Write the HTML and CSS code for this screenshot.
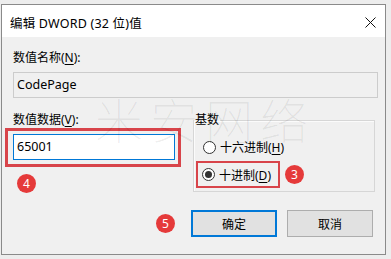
FILE: index.html
```html
<!DOCTYPE html>
<html lang="zh-CN">
<head>
  <meta charset="utf-8">
  <title>编辑 DWORD (32 位)值</title>
  <link rel="stylesheet" href="styles.css">
</head>
<body>
  <div class="window">
    <div class="titlebar">
      <span class="title">编辑 DWORD (32 位)值</span>
      <svg class="close" width="11" height="11" viewBox="0 0 11 11">
        <path d="M0.5 0.5 L10.5 10.5 M10.5 0.5 L0.5 10.5" stroke="#111" stroke-width="1" fill="none"/>
      </svg>
    </div>

    <div class="content">
      <div class="label">数值名称(<u>N</u>):</div>
      <div class="name-box">CodePage</div>

      <div class="lower">
        <div class="data-col">
          <div class="label">数值数据(<u>V</u>):</div>
          <div class="mark mark-input">
            <div class="value-box">65001</div>
          </div>
          <div class="badge badge-4">4</div>
        </div>

        <fieldset class="base-group">
          <legend>基数</legend>
          <div class="radio-row">
            <span class="radio"></span>
            <span>十六进制(<u>H</u>)</span>
          </div>
          <div class="radio-line">
            <div class="mark mark-radio">
              <span class="radio checked"></span>
              <span>十进制(<u>D</u>)</span>
            </div>
            <div class="badge">3</div>
          </div>
        </fieldset>
      </div>

      <div class="buttons">
        <div class="badge">5</div>
        <button class="btn btn-default">确定</button>
        <button class="btn">取消</button>
      </div>
    </div>

    <div class="watermark">米安网络</div>
  </div>
</body>
</html>
```

FILE: styles.css
```css
* {
  box-sizing: border-box;
}

body {
  margin: 0;
  background: #ededed;
  font-family: "Noto Sans", "Noto Sans CJK SC", sans-serif;
  font-size: 12px;
  color: #000;
}

.window {
  position: relative;
  margin: 4px 0 0 1px;
  width: 385px;
  height: 251px;
  border: 1px solid #8a8a8a;
  background: #f0f0f0;
  overflow: hidden;
}

.titlebar {
  height: 32px;
  background: #fff;
  display: flex;
  align-items: center;
  justify-content: space-between;
  padding: 2px 8px 0 8px;
}

.title {
  font-size: 12.5px;
  letter-spacing: 0.2px;
}

.close {
  margin-right: 1px;
}

.content {
  padding: 13px 7px 0 11px;
}

.label {
  line-height: 16px;
  height: 16px;
}

u {
  text-decoration-thickness: 1px;
  text-underline-offset: 2px;
}

.name-box {
  margin-top: 6px;
  height: 26px;
  border: 1px solid #cccccc;
  background: #f0f0f0;
  padding-left: 3px;
  line-height: 24px;
  font-size: 12.5px;
}

.lower {
  margin-top: 14px;
  display: grid;
  grid-template-columns: 168px 182px;
  column-gap: 12px;
  align-items: start;
}

.mark {
  border: 3px solid #d8444a;
}

.mark-input {
  margin-left: -8px;
  padding: 3px 3px 4px 5px;
}

.value-box {
  height: 26px;
  background: #fff;
  border: 1px solid #0078d7;
  padding-left: 3px;
  line-height: 24px;
  font-size: 12.5px;
}

.badge {
  width: 19px;
  height: 19px;
  border-radius: 50%;
  background: #e53a3a;
  color: #fff;
  font-size: 12px;
  line-height: 19px;
  text-align: center;
}

.badge-4 {
  margin: 7px 0 0 4px;
}

.base-group {
  margin: 0;
  padding: 9px 0 3px 0;
  border: 1px solid #d6d6d6;
  box-shadow: inset 1px 1px 0 #fbfbfb;
}

.base-group legend {
  padding: 0 1px;
  margin-left: 0;
  line-height: 16px;
}

.radio-row {
  display: flex;
  align-items: center;
  gap: 4px;
  height: 20px;
  padding-left: 9px;
}

.radio {
  width: 13px;
  height: 13px;
  border: 1px solid #333;
  border-radius: 50%;
  background: #fff;
  display: flex;
  align-items: center;
  justify-content: center;
}

.radio.checked::after {
  content: "";
  width: 7px;
  height: 7px;
  border-radius: 50%;
  background: #333;
}

.radio-line {
  margin-top: 4px;
  display: flex;
  align-items: center;
  gap: 5px;
  padding-left: 2px;
}

.mark-radio {
  display: flex;
  align-items: center;
  gap: 4px;
  height: 27px;
  padding: 0 7px 0 4px;
  border-width: 2px;
}

.buttons {
  margin-top: 17px;
  display: flex;
  align-items: center;
  justify-content: flex-end;
  padding-right: 5px;
}

.buttons .badge {
  margin-right: 16px;
}

.btn {
  width: 86px;
  height: 27px;
  margin: 0;
  border: 1px solid #adadad;
  background: #e1e1e1;
  font-family: inherit;
  font-size: 12px;
  color: #000;
  padding: 0;
}

.btn + .btn {
  margin-left: 10px;
}

.btn-default {
  border: 2px solid #0078d7;
}

.watermark {
  position: absolute;
  left: 93px;
  top: 93px;
  height: 40px;
  font-family: "Noto Sans CJK SC", sans-serif;
  font-weight: 100;
  font-size: 48px;
  line-height: 40px;
  letter-spacing: 7px;
  color: rgba(0, 0, 0, 0.08);
  pointer-events: none;
}
```
